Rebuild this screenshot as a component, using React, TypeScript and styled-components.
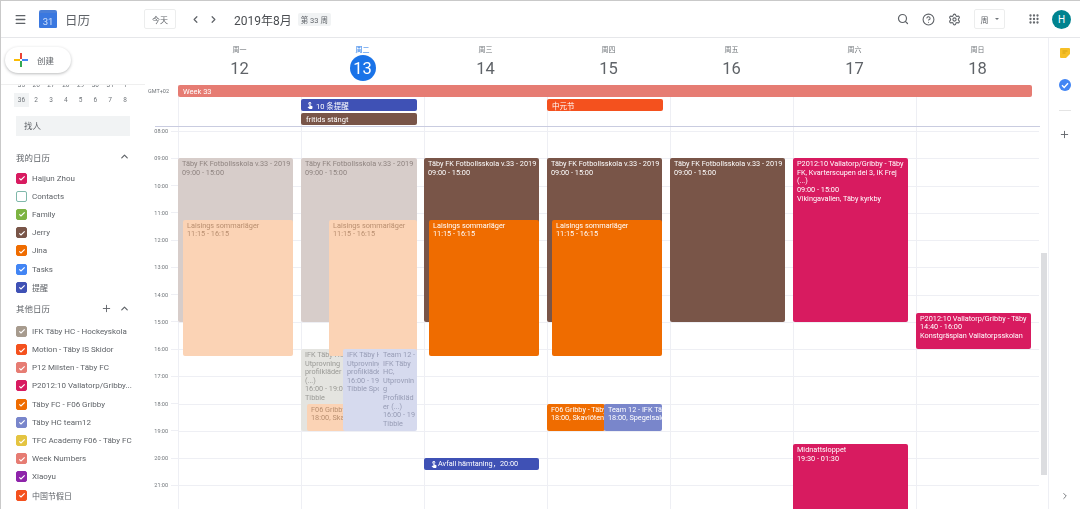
import React from 'react'
import styled, { createGlobalStyle } from 'styled-components'
import { ChevronLeft, ChevronRight, ChevronUp, CircleHelp, Grip, Menu, Plus, Search, Settings } from 'lucide-react'
import { MdTouchApp } from 'react-icons/md'

const HOUR = 27.25
const GRID_OFFSET = 4
const FONT = `Roboto, "Noto Sans CJK SC", sans-serif`
const timeToY = (h: number) => GRID_OFFSET + (h - 8) * HOUR

const GlobalStyle = createGlobalStyle`
  html, body { margin: 0; padding: 0; background: #fff; }
  * { box-sizing: border-box; }
`

const Shell = styled.div`
  display: flex;
  flex-direction: column;
  width: 1080px;
  height: 509px;
  overflow: hidden;
  font-family: ${FONT};
  color: #3c4043;
  border-top: 1px solid #c9c9c9;
  border-left: 1px solid #c9c9c9;
  filter: blur(0.35px);
`

/* top bar */
const TopBar = styled.header`
  display: flex;
  flex: 0 0 37px;
  align-items: center;
  padding-left: 13px;
  border-bottom: 1px solid #e6e7ea;
  color: #5f6368;
`

const LogoBox = styled.div`
  display: flex;
  align-items: flex-end;
  justify-content: center;
  width: 18px;
  height: 18px;
  margin-left: 12px;
  padding-bottom: 1px;
  color: #cfe0fb;
  font-size: 9.5px;
  background: linear-gradient(#4a7fd8 0 3px, #3a78e0 3px);
  border-radius: 2px 2px 1px 1px;
`

const AppName = styled.div`
  margin-left: 8px;
  color: #5f6368;
  font-size: 12.5px;
`

const OutlineButton = styled.div<{ $w: number }>`
  display: flex;
  align-items: center;
  justify-content: center;
  gap: 6px;
  width: ${p => p.$w}px;
  height: 20px;
  color: #5f6368;
  font-size: 8px;
  border: 1px solid #eceded;
  border-radius: 2px;
`

const TodayButton = styled(OutlineButton)`
  margin-left: 54px;
`

const NavIcons = styled.div`
  display: flex;
  gap: 7px;
  margin-left: 14px;
  color: #5f6368;
`

const MonthTitle = styled.div`
  margin-left: 15px;
  color: #4a4d51;
  font-size: 12px;
`

const WeekChip = styled.div`
  margin-left: 6px;
  padding: 1px 3px;
  color: #5f6368;
  font-size: 7.5px;
  background: #f1f3f4;
  border-radius: 2px;
`

const TopActions = styled.div`
  display: flex;
  align-items: center;
  margin-left: auto;
  padding-right: 9px;
`

const ActionIcon = styled.span<{ $ml: number }>`
  display: flex;
  margin-left: ${p => p.$ml}px;
`

const Caret = styled.span`
  width: 0;
  height: 0;
  border-top: 2.5px solid #70757a;
  border-right: 2.5px solid transparent;
  border-left: 2.5px solid transparent;
`

const Avatar = styled.div`
  display: flex;
  align-items: center;
  justify-content: center;
  width: 19px;
  height: 19px;
  margin-left: 12px;
  color: #fff;
  font-size: 10px;
  background: #00838f;
  border-radius: 50%;
`

/* layout */
const Body = styled.div`
  display: flex;
  flex: 1;
  min-height: 0;
`

const Sidebar = styled.aside`
  position: relative;
  flex: 0 0 144px;
  overflow: hidden;
  color: #5f6368;
`

const CreateArea = styled.div`
  height: 47px;
  border-bottom: 1px solid #efefef;
`

const CreateButton = styled.div`
  position: absolute;
  top: 9px;
  left: 4px;
  display: flex;
  align-items: center;
  width: 66px;
  height: 26px;
  padding-left: 9px;
  gap: 9px;
  color: #5f6368;
  font-size: 8.5px;
  background: #fff;
  border-radius: 13px;
  box-shadow: 0 1px 3px rgba(60, 64, 67, 0.35);
`

const MiniCal = styled.div`
  height: 22.4px;
  padding-left: 13px;
  overflow: hidden;
`

const MiniRow = styled.div<{ $clipped?: boolean }>`
  display: flex;
  margin-top: ${p => (p.$clipped ? '-7.2px' : '0')};
`

const MiniCell = styled.span<{ $week?: boolean }>`
  flex: 0 0 14.8px;
  height: 14.8px;
  color: #70757a;
  font-size: 6.5px;
  line-height: 14.8px;
  text-align: center;
  background: ${p => (p.$week ? '#f1f3f4' : 'transparent')};
`

const PeopleSearch = styled.div`
  height: 20px;
  margin: 8.6px 15px 12px 15px;
  padding-left: 8px;
  color: #5f6368;
  font-size: 8.5px;
  line-height: 20px;
  background: #f1f3f4;
`

const SectionTitle = styled.div<{ $mt?: number }>`
  display: flex;
  align-items: center;
  height: 18px;
  margin-top: ${p => p.$mt ?? 0}px;
  padding: 0 15px;
  font-size: 8.5px;
`

const SectionIcons = styled.span`
  display: flex;
  align-items: center;
  gap: 7px;
  margin-left: auto;
  color: #5f6368;
`

const CalendarList = styled.div<{ $mt: number }>`
  margin-top: ${p => p.$mt}px;
  padding-left: 15px;
`

const CalendarRow = styled.div`
  display: flex;
  align-items: center;
  gap: 5px;
  height: 18.2px;
  font-size: 8px;
  white-space: nowrap;
`

const CheckBox = styled.span<{ $color: string; $empty?: boolean }>`
  display: flex;
  flex: 0 0 11px;
  align-items: center;
  justify-content: center;
  height: 11px;
  background: ${p => (p.$empty ? '#fff' : p.$color)};
  border: 1.2px solid ${p => p.$color};
  border-radius: 2px;
`

const Main = styled.main`
  position: relative;
  display: flex;
  flex: 0 0 903px;
  flex-direction: column;
  overflow: hidden;
`

const DayHeads = styled.div`
  display: grid;
  flex: 0 0 47px;
  grid-template-columns: repeat(7, 123px);
  margin-left: 33px;
`

const DayHead = styled.div`
  display: flex;
  flex-direction: column;
  align-items: center;
`

const DayName = styled.div<{ $today?: boolean }>`
  margin-top: 8px;
  color: ${p => (p.$today ? '#1a73e8' : '#70757a')};
  font-size: 7px;
  line-height: 9px;
`

const DayNumber = styled.div<{ $today?: boolean }>`
  display: flex;
  align-items: center;
  justify-content: center;
  width: 26px;
  height: 26px;
  color: ${p => (p.$today ? '#fff' : '#5f6368')};
  font-size: 16.5px;
  background: ${p => (p.$today ? '#1a73e8' : 'transparent')};
  border-radius: 50%;
`

const AllDayRow = styled.div`
  display: flex;
  flex: 0 0 41px;
`

const GmtLabel = styled.div`
  flex: 0 0 33px;
  padding: 3px 9px 0 0;
  color: #70757a;
  font-size: 5.5px;
  text-align: right;
`

const AllDayGrid = styled.div`
  display: grid;
  flex: 0 0 861px;
  grid-template-columns: repeat(7, 123px);
  grid-auto-rows: 12px;
  row-gap: 2px;
  background: repeating-linear-gradient(90deg, #eeeff4 0 1px, transparent 1px 123px);
`

const AllDayChip = styled.div<{ $bg: string; $col: number; $row: number; $span?: number }>`
  display: flex;
  grid-row: ${p => p.$row};
  grid-column: ${p => p.$col} / span ${p => p.$span ?? 1};
  align-items: center;
  gap: 2px;
  margin-right: 7px;
  padding-left: 5px;
  overflow: hidden;
  color: #fff;
  font-size: 7.5px;
  white-space: nowrap;
  background: ${p => p.$bg};
  border-radius: 2px;
`

const AllDayDivider = styled.div`
  flex: 0 0 1px;
  margin: 0 8px 0 10px;
  background: #c9cce0;
`

const TimeGrid = styled.div`
  display: flex;
  flex: 1;
  min-height: 0;
`

const Gutter = styled.div`
  flex: 0 0 33px;
  margin-top: ${GRID_OFFSET - HOUR / 2}px;
`

const HourLabel = styled.div`
  display: flex;
  align-items: center;
  justify-content: flex-end;
  gap: 3px;
  height: ${HOUR}px;
  color: #70757a;
  font-size: 5.5px;
`

const Tick = styled.span`
  width: 7px;
  height: 1px;
  background: #eeeff4;
`

const DayColumn = styled.div`
  position: relative;
  flex: 0 0 123px;
  padding-top: ${GRID_OFFSET}px;
  border-left: 1px solid #eeeff4;
`

const HourSlot = styled.div`
  height: ${HOUR}px;
  border-top: 1px solid #eeeff4;
`

const EventCard = styled.div<{
  $start: number
  $end: number
  $left: number
  $right: number
  $bg: string
  $fg: string
  $z: number
}>`
  position: absolute;
  top: ${p => timeToY(p.$start)}px;
  right: ${p => p.$right + 1}px;
  left: ${p => p.$left - 1}px;
  z-index: ${p => p.$z};
  height: ${p => (p.$end - p.$start) * HOUR}px;
  padding: 2px 4px;
  overflow: hidden;
  color: ${p => p.$fg};
  font-size: 7.3px;
  line-height: 8.6px;
  background: ${p => p.$bg};
  border-radius: 2px;
`

const EventLine = styled.div`
  white-space: nowrap;
`

const ReminderCard = styled(EventCard)`
  display: flex;
  align-items: center;
  gap: 0;
  padding: 0 6px;
  white-space: nowrap;
`

const ScrollThumb = styled.div`
  position: absolute;
  top: 215px;
  right: 1px;
  width: 6px;
  height: 222px;
  background: #dcdde0;
`

const Rail = styled.aside`
  display: flex;
  flex: 1;
  flex-direction: column;
  align-items: center;
  padding-top: 10px;
  border-left: 1px solid #eeeff4;
`

const RailSeparator = styled.div`
  width: 12px;
  height: 1px;
  margin-top: 19px;
  background: #e4e4e4;
`

const RailPlus = styled.div`
  display: flex;
  margin-top: 18px;
  color: #5f6368;
`

const RailBottom = styled.div`
  display: flex;
  margin-top: auto;
  margin-bottom: 8px;
  color: #5f6368;
`

interface CalEvent {
  start: number
  end: number
  left: number
  right: number
  bg: string
  fg: string
  z: number
  lines: string[]
}

const BROWN = '#795548'
const ORANGE = '#ef6c00'
const PINK = '#d81b60'
const FADED_BROWN = { bg: '#d7cdca', fg: '#8f8480' }
const FADED_ORANGE = { bg: '#fbd3b5', fg: '#b98f70' }
const FADED_BLUE = { bg: '#d6daee', fg: '#979cb5' }

const TABY = ['Täby FK Fotbollsskola v.33 - 2019', '09:00 - 15:00']
const LAISINGS = ['Laisings sommarläger', '11:15 - 16:15']

const EVENTS: CalEvent[][] = [
  [
    { start: 9, end: 15, left: 0, right: 7, ...FADED_BROWN, z: 1, lines: TABY },
    { start: 11.25, end: 16.25, left: 5, right: 7, ...FADED_ORANGE, z: 2, lines: LAISINGS },
  ],
  [
    { start: 9, end: 15, left: 0, right: 6, ...FADED_BROWN, z: 1, lines: TABY },
    { start: 11.25, end: 16.25, left: 28, right: 6, ...FADED_ORANGE, z: 3, lines: LAISINGS },
    {
      start: 16,
      end: 19,
      left: 0,
      right: 50,
      bg: '#e4e4e0',
      fg: '#9a9a96',
      z: 2,
      lines: ['IFK Täby HC -', 'Utprovning', 'profilkläder', '(...)', '16:00 - 19:00', 'Tibble'],
    },
    { start: 18, end: 19, left: 6, right: 72, ...FADED_ORANGE, z: 3, lines: ['F06 Gribby - Täby', '18:00, Skavlöten'] },
    {
      start: 16,
      end: 19,
      left: 42,
      right: 37,
      ...FADED_BLUE,
      z: 4,
      lines: ['IFK Täby HC -', 'Utprovning', 'profilkläder', '16:00 - 19:00', 'Tibble Sporthall'],
    },
    {
      start: 16,
      end: 19,
      left: 78,
      right: 6,
      ...FADED_BLUE,
      z: 5,
      lines: ['Team 12 -', 'IFK Täby', 'HC,', 'Utprovnin', 'g', 'Profilkläd', 'er (...)', '16:00 - 19', 'Tibble'],
    },
  ],
  [
    { start: 9, end: 15, left: 0, right: 7, bg: BROWN, fg: '#fff', z: 1, lines: TABY },
    { start: 11.25, end: 16.25, left: 5, right: 7, bg: ORANGE, fg: '#fff', z: 2, lines: LAISINGS },
  ],
  [
    { start: 9, end: 15, left: 0, right: 7, bg: BROWN, fg: '#fff', z: 1, lines: TABY },
    { start: 11.25, end: 16.25, left: 5, right: 7, bg: ORANGE, fg: '#fff', z: 2, lines: LAISINGS },
    { start: 18, end: 19, left: 0, right: 64, bg: ORANGE, fg: '#fff', z: 3, lines: ['F06 Gribby - Täby FC', '18:00, Skavlöten'] },
    { start: 18, end: 19, left: 57, right: 7, bg: '#7986cb', fg: '#fff', z: 4, lines: ['Team 12 - IFK Täby HC', '18:00, Spegelsalen'] },
  ],
  [{ start: 9, end: 15, left: 0, right: 7, bg: BROWN, fg: '#fff', z: 1, lines: TABY }],
  [
    {
      start: 9,
      end: 15,
      left: 0,
      right: 7,
      bg: PINK,
      fg: '#fff',
      z: 1,
      lines: ['P2012:10 Vallatorp/Gribby - Täby', 'FK, Kvarterscupen del 3, IK Frej', '(...)', '09:00 - 15:00', 'Vikingavallen, Täby kyrkby'],
    },
    { start: 19.5, end: 23, left: 0, right: 7, bg: PINK, fg: '#fff', z: 1, lines: ['Midnattsloppet', '19:30 - 01:30'] },
  ],
  [
    {
      start: 14.67,
      end: 16,
      left: 0,
      right: 7,
      bg: PINK,
      fg: '#fff',
      z: 1,
      lines: ['P2012:10 Vallatorp/Gribby - Täby', '14:40 - 16:00', 'Konstgräsplan Vallatorpsskolan'],
    },
  ],
]

const DAYS = [
  ['周一', '12'],
  ['周二', '13'],
  ['周三', '14'],
  ['周四', '15'],
  ['周五', '16'],
  ['周六', '17'],
  ['周日', '18'],
]

const HOURS = Array.from({ length: 15 }, (_, i) => 8 + i)
const MY_CALENDARS = [
  ['Haijun Zhou', PINK],
  ['Contacts', '#7fb8aa'],
  ['Family', '#7cb342'],
  ['Jerry', BROWN],
  ['Jina', ORANGE],
  ['Tasks', '#4285f4'],
  ['提醒', '#3f51b5'],
]
const OTHER_CALENDARS = [
  ['IFK Täby HC - Hockeyskola', '#a79b8e'],
  ['Motion - Täby IS Skidor', '#f4511e'],
  ['P12 Milsten - Täby FC', '#e67c73'],
  ['P2012:10 Vallatorp/Gribby...', PINK],
  ['Täby FC - F06 Gribby', ORANGE],
  ['Täby HC team12', '#7986cb'],
  ['TFC Academy F06 - Täby FC', '#e4c441'],
  ['Week Numbers', '#e67c73'],
  ['Xiaoyu', '#8e24aa'],
  ['中国节假日', '#f4511e'],
]

const Tickmark = () => (
  <svg width="8" height="8" viewBox="0 0 24 24" fill="none" stroke="#fff" strokeWidth="3.5">
    <path d="M4 13l5 5L20 7" />
  </svg>
)

const CalendarItems: React.FC<{ items: string[][]; mt: number }> = ({ items, mt }) => (
  <CalendarList $mt={mt}>
    {items.map(([name, color]) => (
      <CalendarRow key={name}>
        <CheckBox $color={color} $empty={name === 'Contacts'}>
          {name !== 'Contacts' && <Tickmark />}
        </CheckBox>
        {name}
      </CalendarRow>
    ))}
  </CalendarList>
)

export default function App() {
  return (
    <>
      <GlobalStyle />
      <Shell>
        <TopBar>
          <Menu size={13} strokeWidth={2.4} />
          <LogoBox>31</LogoBox>
          <AppName>日历</AppName>
          <TodayButton $w={32}>今天</TodayButton>
          <NavIcons>
            <ChevronLeft size={11} strokeWidth={2.6} />
            <ChevronRight size={11} strokeWidth={2.6} />
          </NavIcons>
          <MonthTitle>2019年8月</MonthTitle>
          <WeekChip>第 33 周</WeekChip>
          <TopActions>
            <ActionIcon $ml={0}>
              <Search size={12} strokeWidth={2.4} />
            </ActionIcon>
            <ActionIcon $ml={13}>
              <CircleHelp size={13} />
            </ActionIcon>
            <ActionIcon $ml={13}>
              <Settings size={13} />
            </ActionIcon>
            <ActionIcon $ml={13}>
              <OutlineButton $w={31}>
                周 <Caret />
              </OutlineButton>
            </ActionIcon>
            <ActionIcon $ml={23}>
              <Grip size={12} strokeWidth={2.6} />
            </ActionIcon>
            <Avatar>H</Avatar>
          </TopActions>
        </TopBar>
        <Body>
          <Sidebar>
            <CreateArea />
            <CreateButton>
              <svg width="14" height="14" viewBox="0 0 14 14" fill="none" strokeWidth="2">
                <path d="M7 0v6" stroke="#ea4335" />
                <path d="M8 7h6" stroke="#4285f4" />
                <path d="M7 8v6" stroke="#34a853" />
                <path d="M0 7h6" stroke="#fbbc05" />
              </svg>
              创建
            </CreateButton>
            <MiniCal>
              <MiniRow $clipped>
                {['35', '26', '27', '28', '29', '30', '31', '1'].map(d => (
                  <MiniCell key={d}>{d}</MiniCell>
                ))}
              </MiniRow>
              <MiniRow>
                {['36', '2', '3', '4', '5', '6', '7', '8'].map((d, i) => (
                  <MiniCell key={d} $week={i === 0}>
                    {d}
                  </MiniCell>
                ))}
              </MiniRow>
            </MiniCal>
            <PeopleSearch>找人</PeopleSearch>
            <SectionTitle>
              我的日历
              <SectionIcons>
                <ChevronUp size={11} strokeWidth={2.6} />
              </SectionIcons>
            </SectionTitle>
            <CalendarItems items={MY_CALENDARS} mt={3} />
            <SectionTitle $mt={3}>
              其他日历
              <SectionIcons>
                <Plus size={11} />
                <ChevronUp size={11} strokeWidth={2.6} />
              </SectionIcons>
            </SectionTitle>
            <CalendarItems items={OTHER_CALENDARS} mt={5} />
          </Sidebar>
          <Main>
            <DayHeads>
              {DAYS.map(([name, num]) => (
                <DayHead key={num}>
                  <DayName $today={num === '13'}>{name}</DayName>
                  <DayNumber $today={num === '13'}>{num}</DayNumber>
                </DayHead>
              ))}
            </DayHeads>
            <AllDayRow>
              <GmtLabel>GMT+02</GmtLabel>
              <AllDayGrid>
                <AllDayChip $bg="#e67c73" $col={1} $row={1} $span={7}>
                  Week 33
                </AllDayChip>
                <AllDayChip $bg="#3f51b5" $col={2} $row={2}>
                  <MdTouchApp size={8} />
                  10 条提醒
                </AllDayChip>
                <AllDayChip $bg={BROWN} $col={2} $row={3}>
                  fritids stängt
                </AllDayChip>
                <AllDayChip $bg="#f4511e" $col={4} $row={2}>
                  中元节
                </AllDayChip>
              </AllDayGrid>
            </AllDayRow>
            <AllDayDivider />
            <TimeGrid>
              <Gutter>
                {HOURS.map(h => (
                  <HourLabel key={h}>
                    {String(h).padStart(2, '0')}:00
                    <Tick />
                  </HourLabel>
                ))}
              </Gutter>
              {EVENTS.map((dayEvents, i) => (
                <DayColumn key={DAYS[i][1]}>
                  {HOURS.map(h => (
                    <HourSlot key={h} />
                  ))}
                  {dayEvents.map(e => (
                    <EventCard
                      key={e.lines.join() + e.left}
                      $start={e.start}
                      $end={e.end}
                      $left={e.left}
                      $right={e.right}
                      $bg={e.bg}
                      $fg={e.fg}
                      $z={e.z}
                    >
                      {e.lines.map((line, n) => (
                        <EventLine key={n}>{line}</EventLine>
                      ))}
                    </EventCard>
                  ))}
                  {i === 2 && (
                    <ReminderCard $start={20} $end={20.45} $left={0} $right={7} $bg="#3f51b5" $fg="#fff" $z={1}>
                      <MdTouchApp size={8} />
                      Avfall hämtaning，20:00
                    </ReminderCard>
                  )}
                </DayColumn>
              ))}
            </TimeGrid>
            <ScrollThumb />
          </Main>
          <Rail>
            <svg width="10" height="10" viewBox="0 0 10 10">
              <path d="M1 0h8a1 1 0 0 1 1 1v5l-4 4H1a1 1 0 0 1-1-1V1a1 1 0 0 1 1-1z" fill="#f6bf26" />
              <path d="M2.5 3h5M2.5 5h3" stroke="#c99a10" strokeWidth="0.7" />
            </svg>
            <svg width="12" height="12" viewBox="0 0 12 12" style={{ marginTop: 21 }}>
              <circle cx="6" cy="6" r="6" fill="#4285f4" />
              <path d="M3 6.2l2.2 2.2L9 4.3" stroke="#fff" strokeWidth="1.4" fill="none" />
            </svg>
            <RailSeparator />
            <RailPlus>
              <Plus size={11} />
            </RailPlus>
            <RailBottom>
              <ChevronRight size={10} />
            </RailBottom>
          </Rail>
        </Body>
      </Shell>
    </>
  )
}
